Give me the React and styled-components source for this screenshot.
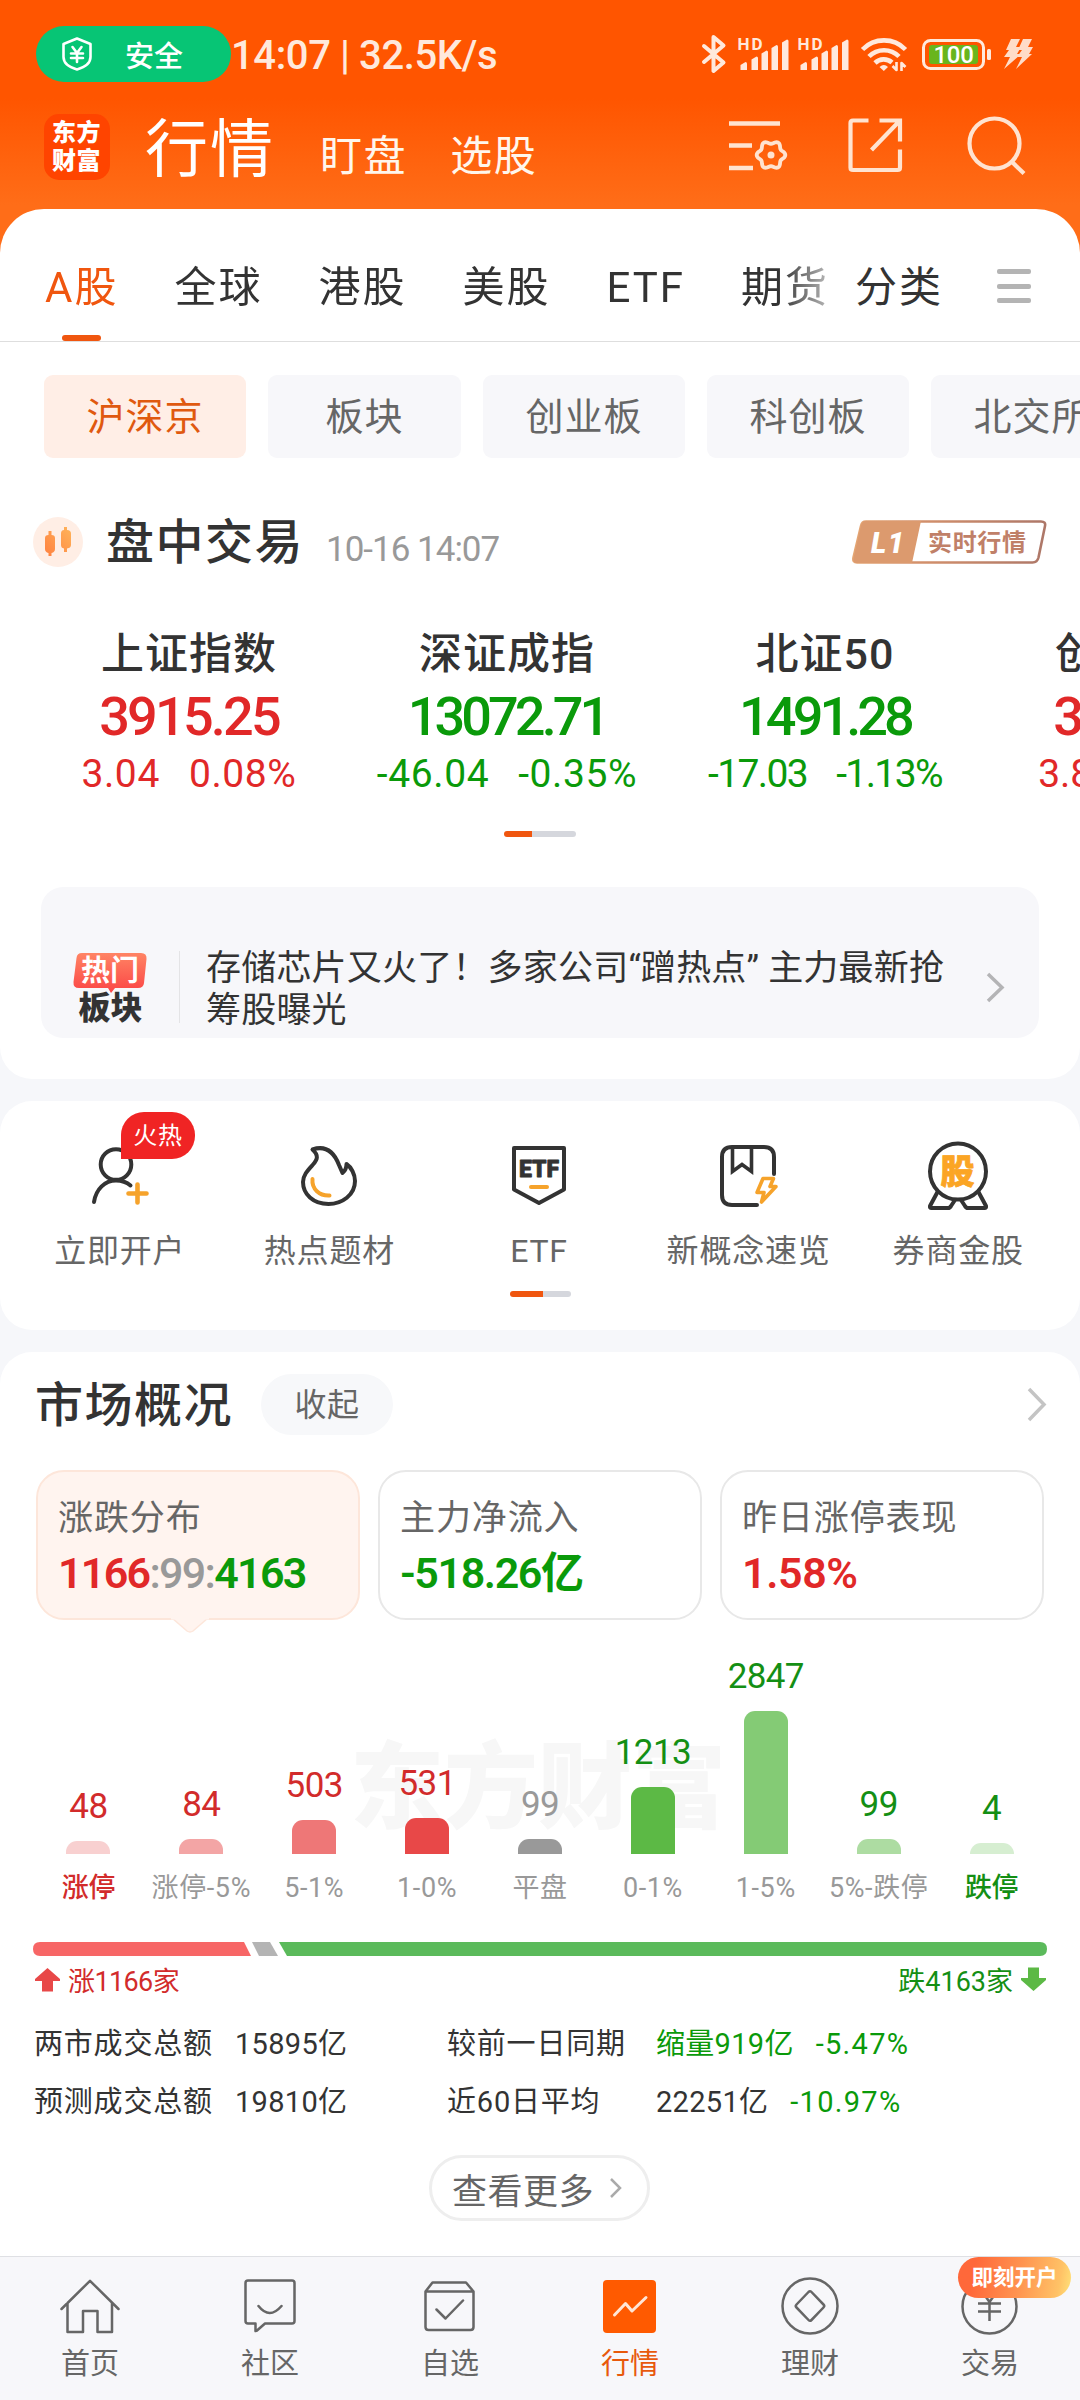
import React from 'react'
import styled, { createGlobalStyle, css } from 'styled-components'

const RED = '#e12828'
const GREEN = '#0a9a0a'
const ORANGE = '#f0560f'
const INK = '#333'
const GREY = '#666'
const AMBER = '#f6a32b'

const GlobalStyle = createGlobalStyle`
  body {
    margin: 0;
    width: 1080px;
    height: 2400px;
    overflow: hidden;
    background: #f6f7fa;
  }
  * {
    box-sizing: border-box;
  }
  svg {
    display: block;
    flex: none;
    overflow: visible;
  }
`

const Screen = styled.div`
  width: 1080px;
  height: 2400px;
  display: flex;
  flex-direction: column;
  overflow: hidden;
  font-family: Roboto, 'Noto Sans CJK SC', sans-serif;
  color: ${INK};
  white-space: nowrap;
  background: linear-gradient(#ff5500 0, #ff5500 98px, #ff6d18 205px, #ff6d18 270px, #f6f7fa 270px);
`

/* ---------- status bar ---------- */

const StatusBar = styled.div`
  height: 106px;
  padding: 2px 47px 0 36px;
  display: flex;
  align-items: center;
  color: #ffe9dc;
`

const SafePill = styled.div`
  width: 195px;
  height: 56px;
  padding-left: 26px;
  display: flex;
  align-items: center;
  gap: 33px;
  border-radius: 28px;
  background: #07c575;
  color: #fff;
  font-size: 29px;
  font-weight: 500;
`

const Clock = styled.div`
  flex: 1;
  padding-top: 4px;
  font-size: 40px;
  font-weight: 500;
  letter-spacing: -0.4px;
  line-height: 50px;
`

const StatusIcons = styled.div`
  display: flex;
  align-items: center;
`

const Spacer = styled.i`
  width: ${props => props.$w}px;
`

/* ---------- header ---------- */

const Header = styled.header`
  height: 103px;
  padding: 8px 54px 0 44px;
  display: flex;
  align-items: flex-start;
`

const Logo = styled.div`
  width: 66px;
  height: 66px;
  padding: 5px 0 0 8px;
  border-radius: 15px;
  background: #ff4400;
  color: #fff;
  font-size: 24px;
  font-weight: 900;
  line-height: 28px;
  letter-spacing: 0.5px;
  white-space: pre-line;
`

const Titles = styled.div`
  flex: 1;
  margin: -9px 0 0 35px;
  display: flex;
  align-items: baseline;
  color: #fff6ec;
  font-size: 42px;
  letter-spacing: 1.6px;
  line-height: 90px;
`

const MainTitle = styled.span`
  padding-bottom: 2px;
  margin-right: 45px;
  color: #fff;
  font-size: 63px;
  letter-spacing: 2px;
`

const SubTitle = styled.span`
  margin-right: 43px;
`

const HeaderIcons = styled.div`
  margin-top: 2px;
  display: flex;
  align-items: center;
  gap: 64px;
  > :first-child {
    margin-right: -4px;
  }
`

/* ---------- cards ---------- */

const Card = styled.section`
  flex: none;
  height: ${props => props.$h}px;
  margin-bottom: ${props => (props.$last ? 0 : 22)}px;
  border-radius: ${props => props.$radius || '32px'};
  background: #fff;
  overflow: hidden;
`

const Tabs = styled.nav`
  height: 133px;
  padding: 21px 0 0 45px;
  display: flex;
  align-items: flex-start;
  border-bottom: 1px solid #dedede;
  font-size: 42px;
  letter-spacing: 2px;
  line-height: 116px;
`

const TabScroller = styled.div`
  width: 783px;
  display: flex;
  gap: 56px;
  overflow: hidden;
  mask-image: linear-gradient(90deg, #000 735px, rgba(0, 0, 0, 0.35) 783px);
`

const Tab = styled.div`
  height: 111px;
  position: relative;
  color: ${props => (props.$active ? ORANGE : INK)};
  letter-spacing: 2px;
  ${props => props.$active && css`
    &::after {
      content: '';
      position: absolute;
      left: 17px;
      bottom: 0;
      width: 39px;
      height: 6px;
      border-radius: 3px;
      background: ${ORANGE};
    }
  `}
`

const TabMore = styled.div`
  margin-left: 27px;
`

const Burger = styled.div`
  width: 34px;
  height: 34px;
  margin: 39px 0 0 54px;
  display: flex;
  flex-direction: column;
  justify-content: space-between;
  i {
    height: 5px;
    border-radius: 2px;
    background: #b4b4b4;
  }
`

const Chips = styled.div`
  margin: 33px 0 0 44px;
  display: flex;
  gap: 22px;
`

const Chip = styled.div`
  flex: none;
  width: ${props => props.$w || 202}px;
  height: 83px;
  border-radius: 9px;
  text-align: center;
  font-size: 38px;
  letter-spacing: 1px;
  line-height: 85px;
  color: ${props => (props.$active ? '#e0590f' : GREY)};
  background: ${props => (props.$active ? '#ffeee6' : '#f7f7fa')};
`

const SectionHead = styled.div`
  height: 50px;
  margin: 59px 33px 0;
  display: flex;
  align-items: center;
`

const CandleBadge = styled.div`
  width: 50px;
  height: 50px;
  border-radius: 25px;
  background: #ffeee5;
`

const SectionTitle = styled.h2`
  margin: 0;
  padding-top: 2px;
  font-size: 48px;
  font-weight: 500;
  letter-spacing: 1.5px;
  line-height: 60px;
`

const Stamp = styled.span`
  flex: 1;
  margin: 14px 0 0 22px;
  color: #999;
  font-size: 35px;
  letter-spacing: -1px;
`

const Indexes = styled.div`
  margin: 62px 0 0 30px;
  display: flex;
`

const IndexCell = styled.div`
  flex: none;
  width: 318px;
  display: flex;
  flex-direction: column;
  align-items: center;
  color: ${props => (props.$up ? RED : GREEN)};
`

const IndexName = styled.div`
  color: ${INK};
  font-size: 43px;
  font-weight: 500;
  letter-spacing: 1px;
  line-height: 50px;
`

const IndexValue = styled.div`
  margin-top: 8px;
  font-size: 54px;
  font-weight: 500;
  letter-spacing: ${props => props.$ls}px;
  line-height: 60px;
`

const IndexChange = styled.div`
  margin-top: 7px;
  display: flex;
  gap: 29px;
  font-size: 39px;
  letter-spacing: ${props => props.$ls}px;
  line-height: 40px;
`

const Pager = styled.div`
  width: ${props => props.$w}px;
  height: 6px;
  margin: ${props => props.$top}px auto 0;
  border-radius: 3px;
  background: linear-gradient(90deg, ${ORANGE} ${props => props.$on}px, #d5d7dd ${props => props.$on}px);
`

const Promo = styled.div`
  height: 151px;
  margin: 50px 41px 0;
  padding: 64px 34px 0 32px;
  display: flex;
  align-items: flex-start;
  border-radius: 22px;
  background: #f7f7fa;
`

const PromoTag = styled.div`
  width: 75px;
  margin-top: 1px;
  text-align: center;
  font-size: 32px;
  font-weight: 900;
  line-height: 30px;
`

const PromoText = styled.p`
  flex: 1;
  margin: -3px 0 0 26px;
  font-size: 35px;
  letter-spacing: 0.2px;
  line-height: 41.5px;
`

const Divider = styled.i`
  width: 1px;
  height: 72px;
  margin-left: 31px;
  background: #e4e4e6;
`

const PromoArrow = styled.div`
  margin-top: 21px;
`

/* ---------- shortcuts ---------- */

const Shortcuts = styled.div`
  height: 190px;
  padding: 0 17px 0 15px;
  display: grid;
  grid-template-columns: repeat(5, 1fr);
`

const Shortcut = styled.div`
  position: relative;
  display: flex;
  flex-direction: column;
  align-items: center;
  color: ${GREY};
  font-size: 32px;
  letter-spacing: 0.8px;
`

const ShortcutIcon = styled.div`
  height: 118px;
  padding-top: 32px;
  display: flex;
  align-items: center;
`

const ShortcutLabel = styled.div`
  margin-top: 9px;
  line-height: 46px;
`

const HotBadge = styled.div`
  position: absolute;
  left: 106px;
  top: 11px;
  width: 74px;
  height: 47px;
  border-radius: 23px 23px 23px 0;
  background: #f02424;
  color: #fff;
  text-align: center;
  font-size: 24px;
  line-height: 48px;
`

/* ---------- market overview ---------- */

const OverviewHead = styled.div`
  height: 61px;
  margin: 22px 33px 0 35px;
  display: flex;
  align-items: center;
  justify-content: space-between;
`

const HeadLeft = styled.div`
  display: flex;
  align-items: center;
  gap: 28px;
`

const Fold = styled.div`
  width: 132px;
  height: 61px;
  border-radius: 31px;
  background: #f7f8fa;
  color: ${GREY};
  text-align: center;
  font-size: 32px;
  letter-spacing: 0.6px;
  line-height: 62px;
`

const Summary = styled.div`
  margin: 35px 36px 0;
  display: grid;
  grid-template-columns: repeat(3, 324px);
  gap: 18px;
`

const SummaryCard = styled.div`
  position: relative;
  height: 150px;
  padding: 25px 0 0 20px;
  border: 2px solid ${props => (props.$active ? '#fde6da' : '#e8e8e8')};
  border-radius: 28px;
  background: ${props => (props.$active ? '#fff4ef' : '#fff')};
`

const SummaryPointer = styled.svg`
  position: absolute;
  left: 133px;
  top: 146px;
`

const SummaryLabel = styled.div`
  color: ${GREY};
  font-size: 35px;
  letter-spacing: 0.9px;
  line-height: 44px;
`

const SummaryValue = styled.div`
  margin-top: 5px;
  color: ${props => props.$color};
  font-size: 43px;
  font-weight: 600;
  letter-spacing: ${props => props.$ls || 0}px;
  line-height: 54px;
`

const Tint = styled.span`
  color: ${props => props.$color};
  font-weight: ${props => props.$weight || 'inherit'};
`

const Chart = styled.div`
  position: relative;
  height: 300px;
  margin: 0 32px;
  display: grid;
  grid-template-columns: repeat(9, 1fr);
`

const Watermark = styled.div`
  position: absolute;
  left: 318px;
  top: 109px;
  color: #f7f7f7;
  font-size: 94px;
  font-weight: 900;
  line-height: 120px;
`

const Column = styled.div`
  position: relative;
  display: flex;
  flex-direction: column;
  align-items: center;
  justify-content: flex-end;
`

const Count = styled.div`
  margin-bottom: 14px;
  color: ${props => props.$color};
  font-size: 35px;
  letter-spacing: -0.6px;
  line-height: 41px;
`

const Bar = styled.div`
  width: 44px;
  border-radius: 11px 11px 0 0;
  background: ${props => props.$color};
`

const Range = styled.div`
  height: 66px;
  padding-top: 14px;
  color: ${props => props.$color};
  font-size: 27px;
  font-weight: ${props => (props.$strong ? 500 : 400)};
  letter-spacing: ${props => (props.$strong ? -0.4 : 0.6)}px;
  line-height: 40px;
`

const Ratio = styled.svg`
  margin: 22px 33px 0;
`

const RatioLegend = styled.div`
  height: 34px;
  margin: 6px 34px 0 35px;
  display: flex;
  justify-content: space-between;
  font-size: 27px;
  letter-spacing: -0.6px;
`

const LegendItem = styled.div`
  display: flex;
  align-items: center;
  gap: 8px;
  color: ${props => props.$color};
  letter-spacing: ${props => (props.$wide ? 0 : -0.6)}px;
`

const Turnover = styled.div`
  margin: 19px 34px 0;
  display: grid;
  grid-template-columns: 201px 212px 209px 1fr;
  font-size: 29px;
  line-height: 58px;
`

const TurnoverName = styled.div`
  letter-spacing: 0.8px;
`

const TurnoverValue = styled.div`
  display: flex;
  gap: 22px;
  letter-spacing: 0.3px;
`

const Percent = styled.span`
  color: ${GREEN};
  letter-spacing: 1.3px;
`

const MoreButton = styled.div`
  width: 221px;
  height: 66px;
  margin: 24px auto 0 429px;
  padding: 0 24px 0 20px;
  display: flex;
  align-items: center;
  justify-content: space-between;
  border: 3px solid #eee;
  border-radius: 33px;
  color: ${GREY};
  font-size: 35px;
  letter-spacing: 0.5px;
`

/* ---------- bottom bar ---------- */

const BottomBar = styled.footer`
  flex: none;
  height: 144px;
  display: grid;
  grid-template-columns: repeat(6, 1fr);
  border-top: 1px solid #dfe0e4;
  background: #f7f7fa;
`

const BottomItem = styled.div`
  position: relative;
  display: flex;
  flex-direction: column;
  align-items: center;
  color: ${props => (props.$active ? '#e8590c' : GREY)};
  font-size: 29px;
  line-height: 46px;
`

const BottomIcon = styled.div`
  height: 84px;
  padding: 14px 1px 0 0;
  display: flex;
  align-items: center;
`

const OpenBadge = styled.div`
  position: absolute;
  left: 58px;
  top: 0;
  width: 113px;
  height: 41px;
  border-radius: 22px;
  background: linear-gradient(100deg, #ff683a 15%, #ff9450 55%, #ffc266 88%, #ffe37a);
  color: #fff;
  text-align: center;
  font-size: 21.5px;
  font-weight: 700;
  line-height: 42px;
`

/* ---------- icons ---------- */

const line = { fill: 'none', strokeLinecap: 'round', strokeLinejoin: 'round' }

const Shield = () => (
    <svg width="30" height="34" {...line} stroke="#fff" strokeWidth="2.6">
        <path d="M15 1.500 28.500 7v13c0 6-5 10-13.500 12.500C6.500 30 1.500 26 1.500 20V7z" />
        <path d="M10.500 10 15 16l4.500-6M15 16v9M9 16.500h12M9 21h12" />
    </svg>
)

const Bluetooth = () => (
    <svg width="24" height="40" {...line} stroke="#ffe9dc" strokeWidth="4">
        <path d="M2 12 21.500 28.500 11.500 37V3L21.500 11.500 2 28" />
    </svg>
)

const SIGNAL = [[2.5, 25], [13.5, 19.5], [23.5, 13.5], [33.5, 8], [44, 2.5]]

const Signal = () => (
    <svg width="50" height="34" fill="#ffe9dc">
        <text x="-0.500" y="13" fontSize="17" fontWeight="700" textLength="25">HD</text>
        {SIGNAL.map(([x, y]) => (
            <path key={x} d={`M${x} ${y + 3}l5-3q1.500 0 1.500 1.500V33H${x}z`} />
        ))}
    </svg>
)

const Wifi = () => (
    <svg width="46" height="36" {...line} strokeLinecap="butt" stroke="#ffe9dc" strokeWidth="4.600">
        <path d="M1.500 13.500a30 30 0 0 1 43 0M8 20.500a21 21 0 0 1 30 0M14 27a12.500 12.500 0 0 1 17-.5" />
        <path d="M18.500 31q4.500-4 8.500 0l-4.200 4z" fill="#ffe9dc" stroke="none" />
        <path d="M35.500 26v8l-4-4M40.500 35v-8l4 4" strokeWidth="2.600" />
    </svg>
)

const Battery = () => (
    <svg width="70" height="31">
        <rect x="1.500" y="1.500" width="60" height="28" rx="7" fill="none" stroke="#ffe9dc" strokeWidth="3" />
        <rect x="7" y="6" width="49" height="19" rx="3" fill="#69b51c" />
        <rect x="65" y="10" width="4" height="11" rx="1.500" fill="#ffe9dc" />
        <text x="31.500" y="24" fontSize="24" fontWeight="500" textAnchor="middle" fill="#fff" letterSpacing="-.3">100</text>
    </svg>
)

const Bolts = () => (
    <svg width="30" height="32" fill="#ffdcc8">
        <path d="M8 1h9l-4 8h5l-4 7h4L1 31l6-12H1l5-7H3z" />
        <path d="M20 1h9l-4 8h5l-4 7h3L13 31l6-12h-5l5-7h-4z" />
    </svg>
)

const gearPoints = Array.from({ length: 72 }, (_, i) => {
    const a = (i * Math.PI) / 36
    const r = 12.7 + 1.6 * Math.cos(6 * a)
    return `${(42 + r * Math.cos(a)).toFixed(2)},${(36 + r * Math.sin(a)).toFixed(2)}`
}).join(' ')

const ListGear = () => (
    <svg width="59" height="54" fill="none" stroke="#ffe3d0" strokeWidth="4.500">
        <path d="M0 4.500h51M0 26.500h23M0 49h24" />
        <polygon points={gearPoints} strokeWidth="3.800" strokeLinejoin="round" />
        <circle cx="42" cy="36" r="3.500" fill="#ffe3d0" stroke="none" />
    </svg>
)

const Share = () => (
    <svg width="55" height="55" fill="none" stroke="#ffe3d0" strokeWidth="4.200">
        <path d="M20.500 2.500H5q-2.500 0-2.500 2.500v44.500q0 2.500 2.500 2.500h44.500q2.500 0 2.500-2.500V31.500M31.500 2.500H52v21M51.500 3 23.500 32" />
    </svg>
)

const Search = () => (
    <svg width="59" height="59" fill="none" stroke="#ffe3d0" strokeWidth="4.200">
        <circle cx="27.500" cy="27.500" r="25" />
        <path d="m44 45 13 12.500" />
    </svg>
)

const Candles = () => (
    <svg width="50" height="50">
        <linearGradient id="candle" x1="0" y1="1" x2="1" y2="0">
            <stop stopColor="#ff8140" />
            <stop offset="1" stopColor="#ffb45a" />
        </linearGradient>
        <path
            fill="url(#candle)"
            d="M15.500 14h3v4q3.500 0 3.500 3v11q0 3-3.500 4v3h-3v-3q-3.500-1-3.500-4V21q0-3 3.500-3zM31 10h3v3q4 0 4 3.500V28q0 3-4 3.500V35h-3v-3.500q-3-.5-3-3.500V16.500q0-3.500 3-3.500z"
        />
    </svg>
)

const LevelBadge = () => (
    <svg width="195" height="44">
        <linearGradient id="level">
            <stop stopColor="#e5a673" />
            <stop offset=".35" stopColor="#d3906b" />
            <stop offset="1" stopColor="#ad7768" />
        </linearGradient>
        <path d="M14 1.500h175q5 0 4 4.500l-6.500 31.500q-1.200 5-6 5H5q-4.500 0-3.500-5L9 6q1-4.500 5-4.500z" fill="none" stroke="url(#level)" strokeWidth="2.600" />
        <path d="M14 1h55l-9 42H5q-4.500 0-3.500-5L9 6q1-5 5-5z" fill="#dc9a6e" />
        <text x="19" y="33" fontSize="29" fontWeight="900" fontStyle="italic" fill="#fff" textLength="33">L1</text>
        <text x="76" y="31" fontSize="24" fontWeight="700" fill="#c08068" textLength="98">实时行情</text>
    </svg>
)

const HotTag = () => (
    <svg width="75" height="41">
        <linearGradient id="hot" x2="0" y2="1">
            <stop stopColor="#ff8464" />
            <stop offset="1" stopColor="#fb4545" />
        </linearGradient>
        <path d="M9 1h59q6 0 5.500 6L71 31q-.5 5-6 5H42l-4 5-3-5H6q-6 0-5.500-6L3.500 6Q4 1 9 1z" fill="url(#hot)" />
        <text x="8" y="29" fontSize="29" fontWeight="700" fill="#fff" textLength="58">热门</text>
    </svg>
)

const Chevron = ({ w, h, color = '#c4c4c4', stroke = 3.5 }) => (
    <svg width={w} height={h} fill="none" stroke={color} strokeWidth={stroke}>
        <path d={`M2 2 ${w - 3} ${h / 2} 2 ${h - 2}`} />
    </svg>
)

const UserPlus = () => (
    <svg width="56" height="58" {...line} stroke={INK} strokeWidth="4">
        <circle cx="24" cy="17.500" r="15.300" />
        <path d="M2 55C4 42 13 33.500 24 33.500c6 0 11 2 14.500 5" />
        <path d="M36.500 46.500h18M45.500 37.500v18" stroke={AMBER} strokeWidth="4.600" />
    </svg>
)

const Flame = () => (
    <svg width="56" height="60" {...line} stroke={INK} strokeWidth="4">
        <path d="M11.500 3.500C25-1 33 6 38 19l3.500 8c2.500-2 4-6 4-9C50 21 54 28 54 35c0 14-13 23-26.500 23C12 58 2 48 2 36c0-7 5-12 10-17.500 4.500-5 6-9-.5-15z" />
        <path d="M11.500 33c-1 10 7 17 17 16.500" stroke={AMBER} />
    </svg>
)

const EtfShield = () => (
    <svg width="54" height="60" {...line} stroke={INK} strokeWidth="4">
        <path d="M2 2h50v41.500L27 57 2 43.500z" />
        <text x="7" y="31" fontSize="23" fontWeight="900" fill={INK} stroke={INK} strokeWidth=".8" textLength="41">ETF</text>
        <path d="M19 41h16" stroke={AMBER} />
    </svg>
)

const Booklet = () => (
    <svg width="58" height="62" {...line} stroke={INK} strokeWidth="4">
        <path d="M54 29V12q0-10-10-10H12Q2 2 2 12v38q0 10 10 10h25" />
        <path d="M12.500 3v23.500l9.500-7 9.500 7V3" strokeLinejoin="miter" strokeWidth="3.600" />
        <path d="M43 33.500h10.500l-3.500 8h6L41.500 57l2.500-9.500h-7z" stroke={AMBER} strokeWidth="3.600" />
    </svg>
)

const Medal = () => (
    <svg width="60" height="69" {...line} stroke={INK} strokeWidth="4">
        <circle cx="30" cy="29.500" r="28" />
        <path d="M9.500 50 2 64q-.5 2 1.500 2H20q2 0 3-2l4-6M50.500 50 58 64q.5 2-1.500 2H40q-2 0-3-2l-4-6" />
        <text x="30" y="42" fontSize="34" fontWeight="900" textAnchor="middle" fill="#fba524" stroke="#fba524" strokeWidth=".8">股</text>
    </svg>
)

const Arrow = ({ color, down }) => (
    <svg width="25" height="25" fill={color}>
        <path d="M12.500 1 25 12v2h-7v10.500H7V14H0v-2z" transform={down ? 'rotate(180 12.5 12.5)' : undefined} />
    </svg>
)

const thin = { ...line, stroke: GREY, strokeWidth: 2.5 }

const HomeIcon = () => (
    <svg width="60" height="54" {...thin}>
        <path d="M1.500 30 30 1.800 58.500 30M7.500 24v29H23V32h14.500v21H52V24" />
    </svg>
)

const CommunityIcon = () => (
    <svg width="52" height="54" {...thin}>
        <path d="M4 1.500h44q2.500 0 2.500 2.500v38q0 2.500-2.500 2.500H21l-8 7-1.500.5v-7.500H4q-2.500 0-2.500-2.500V4q0-2.500 2.500-2.500zM14.500 27q11 14 23 0" />
    </svg>
)

const WatchIcon = () => (
    <svg width="51" height="51" {...thin}>
        <path d="M1.500 10.500 8.500 1.500H42l7.500 9V46q0 3-3 3h-42q-3 0-3-3zh48M12.500 28.500l9 9 17.500-18" />
    </svg>
)

const QuoteIcon = () => (
    <svg width="53" height="53" {...line} stroke="#ffe6d6" strokeWidth="3">
        <rect width="53" height="53" rx="4" fill="#ff5a00" stroke="none" />
        <path d="m11.500 35 11-11.500L29 31l14-13.500" />
    </svg>
)

const WealthIcon = () => (
    <svg width="58" height="58" {...thin}>
        <circle cx="29" cy="29" r="27.500" />
        <path d="m27.500 15-12 12.500q-1.500 1.500 0 3l12 12.500q1.500 1.500 3 0l12-12.500q1.500-1.500 0-3L30.500 15q-1.500-1.500-3 0z" />
    </svg>
)

const TradeIcon = () => (
    <svg width="57" height="57" {...thin} strokeLinecap="butt">
        <circle cx="28.500" cy="28.500" r="27" />
        <path d="m20 12 8.500 12L37 12M28.500 24v19M17 25.500h23M17 33.500h23" />
    </svg>
)

/* ---------- data ---------- */

const INDEXES = [
    { name: '上证指数', value: '3915.25', diff: '3.04', pct: '0.08%', up: true, ls: [-2.8, 0.6] },
    { name: '深证成指', value: '13072.71', diff: '-46.04', pct: '-0.35%', ls: [-3.9, 0.6] },
    { name: '北证50', value: '1491.28', diff: '-17.03', pct: '-1.13%', ls: [-3.9, -1.6] },
    { name: '创业板指', value: '3029.47', diff: '3.80', pct: '0.13%', up: true, ls: [-2.8, 0] }
]

const SHORTCUTS = [
    { label: '立即开户', Icon: UserPlus, badge: '火热' },
    { label: '热点题材', Icon: Flame },
    { label: 'ETF', Icon: EtfShield },
    { label: '新概念速览', Icon: Booklet },
    { label: '券商金股', Icon: Medal }
]

const BARS = [
    { range: '涨停', count: 48, h: 13, bar: '#f8d0d0', color: '#d22b2b', strong: true },
    { range: '涨停-5%', count: 84, h: 15, bar: '#f3a5a5', color: '#d22b2b' },
    { range: '5-1%', count: 503, h: 34, bar: '#ee7777', color: '#d22b2b' },
    { range: '1-0%', count: 531, h: 36, bar: '#e84848', color: '#d22b2b' },
    { range: '平盘', count: 99, h: 15, bar: '#999', color: '#999' },
    { range: '0-1%', count: 1213, h: 67, bar: '#5cb945', color: '#148f14' },
    { range: '1-5%', count: 2847, h: 143, bar: '#84cb75', color: '#148f14' },
    { range: '5%-跌停', count: 99, h: 15, bar: '#addca2', color: '#148f14' },
    { range: '跌停', count: 4, h: 11, bar: '#d6eed1', color: '#148f14', strong: true }
]

const NAV = [
    { label: '首页', Icon: HomeIcon },
    { label: '社区', Icon: CommunityIcon },
    { label: '自选', Icon: WatchIcon },
    { label: '行情', Icon: QuoteIcon, active: true },
    { label: '理财', Icon: WealthIcon },
    { label: '交易', Icon: TradeIcon, badge: '即刻开户' }
]

const App = () => (
    <Screen lang="zh-CN">
        <GlobalStyle />
        <StatusBar>
            <SafePill><Shield />安全</SafePill>
            <Clock>14:07 | 32.5K/s</Clock>
            <StatusIcons>
                <Bluetooth />
                <Spacer $w={12} />
                <Signal />
                <Spacer $w={10} />
                <Signal />
                <Spacer $w={13} />
                <Wifi />
                <Spacer $w={15} />
                <Battery />
                <Spacer $w={11} />
                <Bolts />
            </StatusIcons>
        </StatusBar>
        <Header>
            <Logo>{'东方\n财富'}</Logo>
            <Titles>
                <MainTitle>行情</MainTitle>
                <SubTitle>盯盘</SubTitle>
                <SubTitle>选股</SubTitle>
            </Titles>
            <HeaderIcons>
                <ListGear />
                <Share />
                <Search />
            </HeaderIcons>
        </Header>

        <Card $h={870} $radius="44px 44px 32px 32px">
            <Tabs>
                <TabScroller>
                    <Tab $active>A股</Tab>
                    <Tab>全球</Tab>
                    <Tab>港股</Tab>
                    <Tab>美股</Tab>
                    <Tab>ETF</Tab>
                    <Tab>期货</Tab>
                </TabScroller>
                <TabMore>分类</TabMore>
                <Burger><i /><i /><i /></Burger>
            </Tabs>
            <Chips>
                <Chip $active>沪深京</Chip>
                <Chip $w={193}>板块</Chip>
                <Chip>创业板</Chip>
                <Chip>科创板</Chip>
                <Chip>北交所</Chip>
            </Chips>
            <SectionHead>
                <CandleBadge><Candles /></CandleBadge>
                <Spacer $w={23} />
                <SectionTitle>盘中交易</SectionTitle>
                <Stamp>10-16 14:07</Stamp>
                <LevelBadge />
            </SectionHead>
            <Indexes>
                {INDEXES.map(item => (
                    <IndexCell key={item.name} $up={item.up}>
                        <IndexName>{item.name}</IndexName>
                        <IndexValue $ls={item.ls[0]}>{item.value}</IndexValue>
                        <IndexChange $ls={item.ls[1]}>
                            <span>{item.diff}</span>
                            <span>{item.pct}</span>
                        </IndexChange>
                    </IndexCell>
                ))}
            </Indexes>
            <Pager $w={72} $on={28} $top={37} />
            <Promo>
                <PromoTag>
                    <HotTag />
                    板块
                </PromoTag>
                <Divider />
                <PromoText>
                    存储芯片又火了！多家公司“蹭热点” 主力最新抢
                    <br />
                    筹股曝光
                </PromoText>
                <PromoArrow><Chevron w={19} h={31} color="#b4b4b6" /></PromoArrow>
            </Promo>
        </Card>

        <Card $h={229}>
            <Shortcuts>
                {SHORTCUTS.map(({ label, Icon, badge }) => (
                    <Shortcut key={label}>
                        <ShortcutIcon><Icon /></ShortcutIcon>
                        <ShortcutLabel>{label}</ShortcutLabel>
                        {badge && <HotBadge>{badge}</HotBadge>}
                    </Shortcut>
                ))}
            </Shortcuts>
            <Pager $w={61} $on={33} $top={0} />
        </Card>

        <Card $h={904} $radius="32px 32px 0 0" $last>
            <OverviewHead>
                <HeadLeft>
                    <SectionTitle>市场概况</SectionTitle>
                    <Fold>收起</Fold>
                </HeadLeft>
                <Chevron w={20} h={35} />
            </OverviewHead>
            <Summary>
                <SummaryCard $active>
                    <SummaryLabel>涨跌分布</SummaryLabel>
                    <SummaryValue $ls={-1.7}>
                        <Tint $color={RED}>1166</Tint>
                        <Tint $color="#999" $weight={500}>:99:</Tint>
                        <Tint $color={GREEN}>4163</Tint>
                    </SummaryValue>
                    <SummaryPointer width="38" height="16">
                        <path d="M1 0 16 13q3 2 6 0L37 0" fill="#fff4ef" stroke="#fde6da" strokeWidth="1.500" />
                        <path d="M0 0h38" stroke="#fff4ef" strokeWidth="3" />
                    </SummaryPointer>
                </SummaryCard>
                <SummaryCard>
                    <SummaryLabel>主力净流入</SummaryLabel>
                    <SummaryValue $color={GREEN} $ls={-1.4}>-518.26亿</SummaryValue>
                </SummaryCard>
                <SummaryCard>
                    <SummaryLabel>昨日涨停表现</SummaryLabel>
                    <SummaryValue $color={RED} $ls={-0.4}>1.58%</SummaryValue>
                </SummaryCard>
            </Summary>
            <Chart>
                <Watermark>东方财富</Watermark>
                {BARS.map(item => (
                    <Column key={item.range}>
                        <Count $color={item.color}>{item.count}</Count>
                        <Bar $color={item.bar} style={{ height: item.h }} />
                        <Range $color={item.strong ? item.color : '#999'} $strong={item.strong}>{item.range}</Range>
                    </Column>
                ))}
            </Chart>
            <Ratio width="1014" height="14">
                <path d="M7 0h204l7 14H7Q0 14 0 7t7-7z" fill="#f76666" />
                <path d="M219 0h18l8 14h-19z" fill="#b4b4b4" />
                <path d="M246 0h761q7 0 7 7t-7 7H254z" fill="#5bba5b" />
            </Ratio>
            <RatioLegend>
                <LegendItem $color="#d22b2b"><Arrow color="#e84848" />涨1166家</LegendItem>
                <LegendItem $color="#148f14" $wide>跌4163家<Arrow color="#5cb945" down /></LegendItem>
            </RatioLegend>
            <Turnover>
                <TurnoverName>两市成交总额</TurnoverName>
                <TurnoverValue>15895亿</TurnoverValue>
                <TurnoverName>较前一日同期</TurnoverName>
                <TurnoverValue>
                    <Tint $color={GREEN}>缩量919亿</Tint>
                    <Percent>-5.47%</Percent>
                </TurnoverValue>
                <TurnoverName>预测成交总额</TurnoverName>
                <TurnoverValue>19810亿</TurnoverValue>
                <TurnoverName>近60日平均</TurnoverName>
                <TurnoverValue>
                    <span>22251亿</span>
                    <Percent>-10.97%</Percent>
                </TurnoverValue>
            </Turnover>
            <MoreButton>
                查看更多
                <Chevron w={14} h={22} color="#aaa" stroke={2.5} />
            </MoreButton>
        </Card>

        <BottomBar>
            {NAV.map(({ label, Icon, badge, active }) => (
                <BottomItem key={label} $active={active}>
                    <BottomIcon><Icon /></BottomIcon>
                    {label}
                    {badge && <OpenBadge>{badge}</OpenBadge>}
                </BottomItem>
            ))}
        </BottomBar>
    </Screen>
)

export default App
